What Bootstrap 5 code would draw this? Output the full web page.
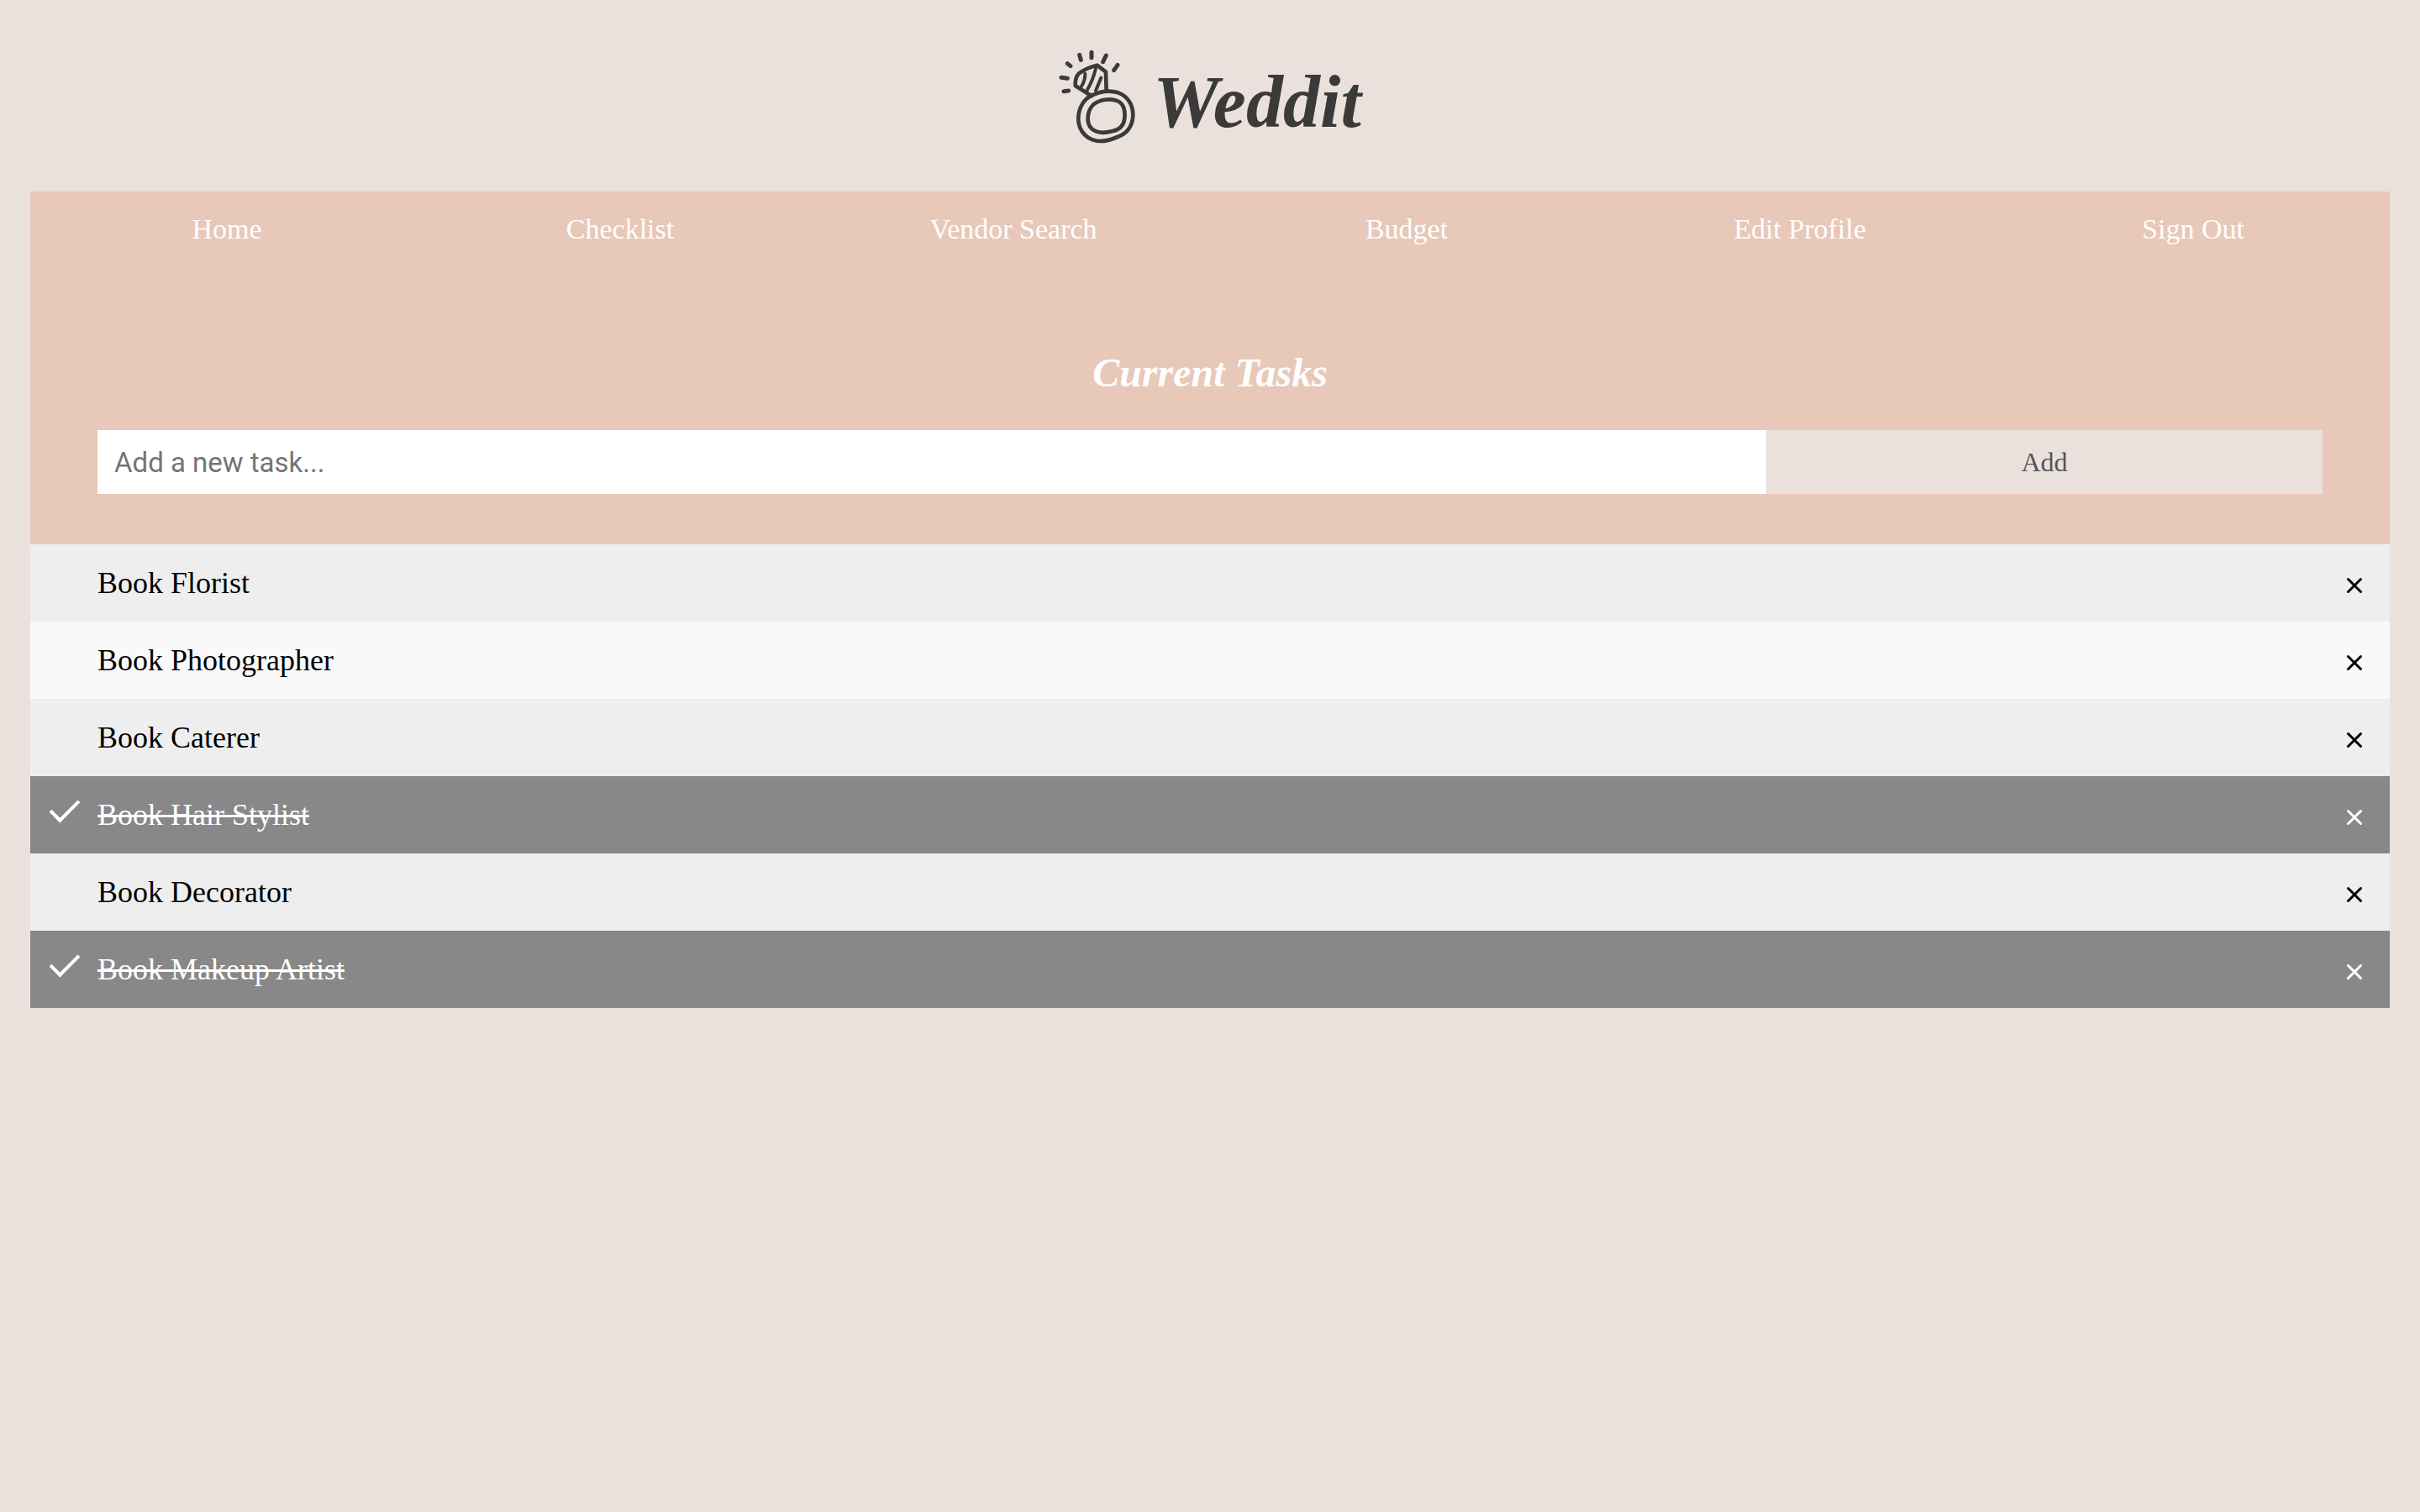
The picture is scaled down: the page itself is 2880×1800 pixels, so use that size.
<!DOCTYPE html>
<html lang="en">
<head>
<meta charset="utf-8">
<meta name="viewport" content="width=device-width, initial-scale=1">
<title>Weddit</title>
<link href="https://cdn.jsdelivr.net/npm/bootstrap@5.3.0/dist/css/bootstrap.min.css" rel="stylesheet">
<style>
  body { background: #ebe1dc; font-family: "Liberation Serif", serif; padding: 0 36px; }
  .brand-bar { height: 228px; gap: 20px; padding-top: 2px; }
  .brand-bar svg { width: 92px; height: 115px; }
  .brand-name { padding-top: 14px; font: italic bold 88px/96px "Liberation Serif", serif; color: #3a3a3a; }
  .panel-top { background: #e8c8b9; }
  .main-nav .nav-link { color: #fff; font-size: 34px; line-height: 42px; padding: 24px 0; }
  .task-head { padding: 98px 80px 60px; }
  .task-head h1 { color: #fff; font-size: 48px; line-height: 56px; margin-bottom: 40px; }
  .task-input { height: 76px; padding: 0 20px; border: 0; font: 33px/40px Roboto, sans-serif; }
  .task-input::placeholder { color: #757575; opacity: 1; }
  .task-add { height: 76px; border: 0; background: #ebe1dc; color: #555; font-size: 32px; line-height: 40px; }
  .task { height: 92px; background: #f9f9f9; color: #000; font-size: 36px; }
  .task:nth-child(odd) { background: #eee; }
  .task.done { background: #888; color: #fff; }
  .task.done label { text-decoration: line-through; }
  .task-check { appearance: none; width: 80px; height: 92px; margin: 0; padding: 20px 32px; cursor: pointer; }
  .task-check:checked::before { content: ""; display: block; width: 18px; height: 34px; border: solid #fff; border-width: 0 4px 4px 0; transform: rotate(45deg); }
  .task-close { width: 84px; padding-top: 6px; border: 0; background: none; color: inherit; }
  .task-close svg { display: block; width: 20px; height: 20px; margin: 0 auto; }
</style>
</head>
<body>
<header class="brand-bar d-flex justify-content-center align-items-center">
  <svg viewBox="60 55 276 345" fill="none" stroke="#3a3a3a" stroke-width="15" stroke-linecap="round" stroke-linejoin="round" aria-hidden="true">
    <path d="M177 68v19M134 77l5 18M91 108l11 9M69 158l22 3M78 207l17-2M229 79l-11 23M270 113l-13 19"/>
    <path d="M177 224L119 187Q118 157 132 143Q161 122 197 114L228 138L230 205" stroke-width="14"/>
    <path d="M154 144Q155 167 141 190M192 126Q182 169 159 207M211 159L192 205" stroke-width="12"/>
    <path d="M177 222C208 207 244 203 272 212C306 224 326 256 325 294C323 332 304 358 270 370C242 382 211 391 184 381C150 370 129 340 130 302C131 264 151 235 177 222Z" stroke-width="14"/>
    <path d="M184 254C208 236 240 232 266 240C293 250 298 275 295 304C292 331 276 345 250 350C222 357 195 356 178 341C157 323 160 277 184 254Z" stroke-width="14"/>
  </svg>
  <span class="brand-name">Weddit</span>
</header>

<main>
  <div class="panel-top">
    <nav class="main-nav" aria-label="Main">
      <ul class="nav nav-fill row g-0 row-cols-6 text-center">
        <li class="col"><a class="nav-link" href="#">Home</a></li>
        <li class="col"><a class="nav-link" href="#">Checklist</a></li>
        <li class="col"><a class="nav-link" href="#">Vendor Search</a></li>
        <li class="col"><a class="nav-link" href="#">Budget</a></li>
        <li class="col"><a class="nav-link" href="#">Edit Profile</a></li>
        <li class="col"><a class="nav-link" href="#">Sign Out</a></li>
      </ul>
    </nav>
    <section class="task-head">
      <h1 class="text-center fst-italic fw-bold">Current Tasks</h1>
      <form class="row g-0">
        <input class="task-input col-9 rounded-0" type="text" placeholder="Add a new task..." aria-label="Add a new task">
        <button class="task-add col-3" type="button">Add</button>
      </form>
    </section>
  </div>

  <ul class="list-unstyled mb-0">
    <li class="task d-flex align-items-center">
      <input class="task-check" type="checkbox" id="t1"><label class="flex-grow-1" for="t1">Book Florist</label>
      <button class="task-close align-self-stretch" type="button" aria-label="Remove Book Florist"><svg viewBox="0 0 20 20" stroke="currentColor" stroke-width="3" stroke-linecap="round"><path d="M2.500 2.500l15 15M17.500 2.500l-15 15"/></svg></button>
    </li>
    <li class="task d-flex align-items-center">
      <input class="task-check" type="checkbox" id="t2"><label class="flex-grow-1" for="t2">Book Photographer</label>
      <button class="task-close align-self-stretch" type="button" aria-label="Remove Book Photographer"><svg viewBox="0 0 20 20" stroke="currentColor" stroke-width="3" stroke-linecap="round"><path d="M2.500 2.500l15 15M17.500 2.500l-15 15"/></svg></button>
    </li>
    <li class="task d-flex align-items-center">
      <input class="task-check" type="checkbox" id="t3"><label class="flex-grow-1" for="t3">Book Caterer</label>
      <button class="task-close align-self-stretch" type="button" aria-label="Remove Book Caterer"><svg viewBox="0 0 20 20" stroke="currentColor" stroke-width="3" stroke-linecap="round"><path d="M2.500 2.500l15 15M17.500 2.500l-15 15"/></svg></button>
    </li>
    <li class="task done d-flex align-items-center">
      <input class="task-check" type="checkbox" id="t4" checked><label class="flex-grow-1" for="t4">Book Hair Stylist</label>
      <button class="task-close align-self-stretch" type="button" aria-label="Remove Book Hair Stylist"><svg viewBox="0 0 20 20" stroke="currentColor" stroke-width="3" stroke-linecap="round"><path d="M2.500 2.500l15 15M17.500 2.500l-15 15"/></svg></button>
    </li>
    <li class="task d-flex align-items-center">
      <input class="task-check" type="checkbox" id="t5"><label class="flex-grow-1" for="t5">Book Decorator</label>
      <button class="task-close align-self-stretch" type="button" aria-label="Remove Book Decorator"><svg viewBox="0 0 20 20" stroke="currentColor" stroke-width="3" stroke-linecap="round"><path d="M2.500 2.500l15 15M17.500 2.500l-15 15"/></svg></button>
    </li>
    <li class="task done d-flex align-items-center">
      <input class="task-check" type="checkbox" id="t6" checked><label class="flex-grow-1" for="t6">Book Makeup Artist</label>
      <button class="task-close align-self-stretch" type="button" aria-label="Remove Book Makeup Artist"><svg viewBox="0 0 20 20" stroke="currentColor" stroke-width="3" stroke-linecap="round"><path d="M2.500 2.500l15 15M17.500 2.500l-15 15"/></svg></button>
    </li>
  </ul>
</main>
<script src="https://cdn.jsdelivr.net/npm/bootstrap@5.3.0/dist/js/bootstrap.bundle.min.js"></script>
</body>
</html>
